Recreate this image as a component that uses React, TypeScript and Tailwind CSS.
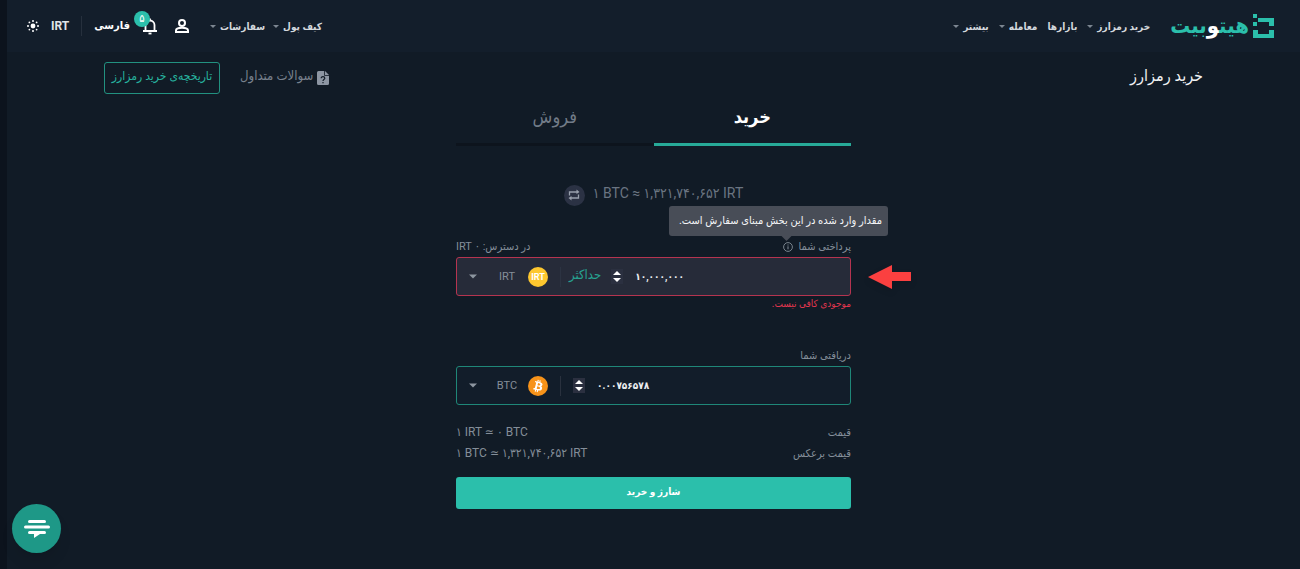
import type { ReactNode } from "react";

function Caret({ className = "" }: { className?: string }) {
  return (
    <svg viewBox="0 0 10 5" className={className} fill="currentColor" aria-hidden="true">
      <path d="M0 0h10L5 5z" />
    </svg>
  );
}

function NavItem({ children, menu = true }: { children: ReactNode; menu?: boolean }) {
  return (
    <a href="#" className="flex items-center gap-1 whitespace-nowrap text-[10px] font-bold text-[#d3d8dd]">
      {children}
      {menu && <Caret className="h-[3px] w-[6px] text-[#7c8691]" />}
    </a>
  );
}

function Logo() {
  return (
    <a href="#" className="flex items-center gap-1 text-[#2bbfab]">
      <svg viewBox="0 0 21 24" className="h-6 w-[21px]" fill="currentColor" aria-hidden="true">
        <path d="M0 0h4v4H0zM0 8h4v4H0zM5 4h16v8h-5V8H5z" />
        <path d="M0 16h5v4h11v-4h5v8H0z" />
      </svg>
      <span className="text-[22px] leading-6 font-bold">
        هیت<span className="text-white">و</span>بیت
      </span>
    </a>
  );
}

function Spinner() {
  return (
    <span className="flex h-[15px] w-3 flex-col items-center justify-center gap-[3px] bg-[#2b3040] text-white">
      <button type="button" aria-label="افزایش" className="block h-1">
        <Caret className="h-1 w-2 rotate-180" />
      </button>
      <button type="button" aria-label="کاهش" className="block h-1">
        <Caret className="h-1 w-2" />
      </button>
    </span>
  );
}

function IrtCoin() {
  return (
    <span className="flex size-5 items-center justify-center rounded-full bg-[#fdc72f] font-[Roboto] text-[9px] leading-5 font-bold text-white">
      IRT
    </span>
  );
}

function BtcCoin() {
  return (
    <svg viewBox="0 0 32 32" className="size-5" aria-hidden="true">
      <circle cx="16" cy="16" r="16" fill="#f7931a" />
      <path
        fill="#fff"
        d="M23.2 14c.3-2.1-1.3-3.2-3.5-4l.7-2.8-1.7-.5-.7 2.8-1.4-.3.7-2.8-1.7-.4-.7 2.8-3.5-.8-.4 1.8s1.2.3 1.2.3c.7.2.8.6.8 1l-2 7.8c-.1.2-.3.5-.8.4l-1.2-.3-.9 2 3.3.8-.7 2.9 1.7.4.7-2.8 1.4.4-.7 2.8 1.7.4.7-2.9c3 .6 5.200.3 6.100-2.300.8-2.100 0-3.400-1.500-4.200 1.100-.2 2-1 2.400-2.500zm-4 5.600c-.5 2.200-4.200 1-5.300.7l1-3.800c1.100.3 4.900.9 4.300 3.100zm.5-5.600c-.5 2-3.500 1-4.500.7l.9-3.500c1 .3 4.100.8 3.600 2.800z"
      />
    </svg>
  );
}

function CoinPicker({ code, icon }: { code: string; icon: ReactNode }) {
  return (
    <button type="button" aria-label={"انتخاب ارز " + code} className="flex items-center text-[#8d96a0]">
      <Caret className="mr-5 h-[5px] w-2" />
      <span className="flex w-5 justify-center font-[Roboto] text-[11px] leading-4 text-[#858e99]">{code}</span>
      <span className="ml-[11px]">{icon}</span>
    </button>
  );
}

export default function App() {
  return (
    <div
      dir="rtl"
      className="min-h-screen border-l-[7px] border-[#0c131d] bg-[#111b26] font-[Roboto,'DejaVu_Sans_Condensed','DejaVu_Sans',sans-serif] text-[#848e99]"
    >
      <header className="flex h-[52px] items-center justify-between bg-[#131e2b] pr-[26px] pl-5">
        <nav className="flex items-center gap-[10px]" aria-label="اصلی">
          <div className="ml-[10px]">
            <Logo />
          </div>
          <NavItem>خرید رمزارز</NavItem>
          <NavItem menu={false}>بازارها</NavItem>
          <NavItem>معامله</NavItem>
          <NavItem>بیشتر</NavItem>
        </nav>
        <div className="flex items-center gap-3 text-white">
          <div className="ml-2 flex items-center gap-2">
            <NavItem>کیف پول</NavItem>
            <NavItem>سفارشات</NavItem>
          </div>
          <button type="button" aria-label="حساب کاربری" className="ml-1">
            <svg viewBox="0 0 16 16" className="size-4" fill="none" stroke="currentColor" strokeWidth="2" aria-hidden="true">
              <circle cx="8" cy="5" r="3" />
              <path d="M2 14v-1.500c0-2 3.500-2.700 6-2.700s6 .7 6 2.700V14z" />
            </svg>
          </button>
          <button type="button" aria-label="اعلان‌ها" className="relative">
            <svg viewBox="0 0 16 18" className="h-[18px] w-4" fill="none" stroke="currentColor" strokeWidth="1.800" aria-hidden="true">
              <path d="M3.500 13.500V8a4.500 4.500 0 0 1 9 0v5.500M1 14h14M8 1.500v2" />
              <path d="M6.500 16.500h3" />
            </svg>
            <span className="absolute -top-[6px] -left-2 flex size-4 items-center justify-center rounded-full bg-[#2bbfab] text-[11px] leading-4">
              ۵
            </span>
          </button>
          <button type="button" className="text-[11px] leading-5 font-bold">
            فارسی
          </button>
          <span className="h-5 w-px bg-[#26303d]" />
          <button type="button" className="text-xs leading-5 font-bold text-[#e0e4e8]">
            IRT
          </button>
          <button type="button" aria-label="حالت روشن">
            <svg viewBox="0 0 12 12" className="size-3" fill="currentColor" aria-hidden="true">
              <circle cx="6" cy="6" r="2.400" />
              <circle cx="6" cy="1" r="1" />
              <circle cx="6" cy="11" r="1" />
              <circle cx="1" cy="6" r="1" />
              <circle cx="11" cy="6" r="1" />
              <circle cx="2.400" cy="2.400" r=".9" />
              <circle cx="9.600" cy="2.400" r=".9" />
              <circle cx="2.400" cy="9.600" r=".9" />
              <circle cx="9.600" cy="9.600" r=".9" />
            </svg>
          </button>
        </div>
      </header>

      <main className="mx-auto w-full max-w-[1099px] pt-[10px]">
        <div className="flex h-8 items-center justify-between">
          <h1 className="pb-1 text-base leading-7 text-[#f0f2f4]">خرید رمزارز</h1>
          <div className="flex items-center gap-5">
            <a href="#" className="flex items-center gap-1 text-[13px] text-[#78818d]">
              <svg viewBox="0 0 12 14" className="h-[14px] w-3" aria-hidden="true">
                <path fill="#8d96a3" d="M1.500 0H8l4 4v8.500a1.500 1.500 0 0 1-1.500 1.500h-9A1.500 1.500 0 0 1 0 12.500v-11A1.500 1.500 0 0 1 1.500 0z" />
                <path d="M7.500 0v4.500H12" fill="none" stroke="#111b26" strokeWidth=".8" />
                <path d="M4.200 7.300c0-2.300 3.600-2.200 3.600 0 0 1.200-1.800 1.300-1.800 2.700M6 11v1.200" fill="none" stroke="#111b26" strokeWidth="1.200" />
              </svg>
              <span className="pb-1">سوالات متداول</span>
            </a>
            <button type="button" className="h-8 w-[116px] rounded-[3px] border border-[#229180] pb-1 text-xs whitespace-nowrap text-[#27b39f]">
              تاریخچه‌ی خرید رمزارز
            </button>
          </div>
        </div>

        <section className="mx-auto w-full max-w-[395px]">
          <div role="tablist" className="grid h-[52px] grid-cols-2 text-lg">
            <button type="button" role="tab" aria-selected="true" className="border-b-[3px] border-[#27aa98] pb-1 font-bold text-white">
              خرید
            </button>
            <button type="button" role="tab" aria-selected="false" className="border-b-[3px] border-[#0d141d] pb-1 text-[#727c88]">
              فروش
            </button>
          </div>

          <div dir="ltr" className="mt-[35px] flex h-6 items-center justify-center gap-2 text-sm text-[#6b7582]">
            <button type="button" aria-label="جابه‌جایی نرخ" className="mt-1 flex size-[21px] items-center justify-center rounded-full bg-[#2b3244]">
              <svg viewBox="0 0 12 12" className="size-3" fill="none" stroke="#98a0ad" aria-hidden="true">
                <path strokeWidth="1.300" d="M1.500 6.500V3H9M10.500 5.500V9H3" />
                <path fill="#98a0ad" stroke="none" d="M8.500 .5 11.500 3 8.500 5zM3.500 7 .5 9l3 2.500z" />
              </svg>
            </button>
            <span>۱ BTC ≈ ۱,۳۲۱,۷۴۰,۶۵۲ IRT</span>
          </div>

          <div className="relative mt-8">
            <div className="flex h-5 items-center justify-between text-[11px]">
              <span className="flex items-center gap-[6px]">
                <label htmlFor="pay">پرداختی شما</label>
                <svg viewBox="0 0 10 10" className="size-[10px]" fill="none" stroke="currentColor" aria-hidden="true">
                  <circle cx="5" cy="5" r="4.400" strokeWidth=".9" />
                  <path d="M5 4.300v3M5 2.500v1" />
                </svg>
              </span>
              <span>در دسترس: ۰ IRT</span>
            </div>
            <div
              role="tooltip"
              className="absolute -right-[37px] bottom-full mb-px flex h-[30px] w-[219px] items-center rounded-[3px] bg-[#484d57] px-[6px] text-[11px] whitespace-nowrap text-[#f5f6f7]"
            >
              مقدار وارد شده در این بخش مبنای سفارش است.
              <Caret className="absolute top-full right-24 h-[5px] w-[11px] text-[#484d57]" />
            </div>
            <div dir="ltr" className="flex h-[39px] items-center rounded-[3px] border border-[#b53450] bg-[#262b39] pl-3">
              <CoinPicker code="IRT" icon={<IrtCoin />} />
              <span className="ml-3 h-5 w-px bg-[#2c3342]" />
              <button type="button" className="mr-[10px] ml-2 pb-1 text-[13px] text-[#26a392]">
                حداکثر
              </button>
              <Spinner />
              <input
                id="pay"
                type="text"
                inputMode="decimal"
                defaultValue="۱۰,۰۰۰,۰۰۰"
                className="ml-3 min-w-0 flex-1 bg-transparent text-[10px] font-bold text-[#eceef0] outline-none"
              />
            </div>
            <svg viewBox="0 0 43 26" className="absolute top-7 -right-[60px] h-[26px] w-[43px] drop-shadow-md" fill="#fb4040" aria-hidden="true">
              <path d="M0 12 24 0v7h19v9H24v8z" />
            </svg>
            <p className="text-[10px] leading-4 text-[#e0364e]">موجودی کافی نیست.</p>
          </div>

          <div className="mt-[34px]">
            <label htmlFor="receive" className="block text-[11px] leading-5">
              دریافتی شما
            </label>
            <div dir="ltr" className="flex h-[39px] items-center rounded-[3px] border border-[#1f8778] bg-[#121d2a] pl-3">
              <CoinPicker code="BTC" icon={<BtcCoin />} />
              <span className="mr-3 ml-3 h-5 w-px bg-[#29313e]" />
              <Spinner />
              <input
                id="receive"
                type="text"
                inputMode="decimal"
                defaultValue="۰.۰۰۷۵۶۵۷۸"
                className="ml-3 min-w-0 flex-1 bg-transparent text-[10px] font-bold text-[#eceef0] outline-none"
              />
            </div>
          </div>

          <dl className="mt-[17px] text-[11px] leading-[21px]">
            <div className="flex justify-between">
              <dt>قیمت</dt>
              <dd dir="ltr" className="text-xs leading-[21px]">۱ IRT ≃ ۰ BTC</dd>
            </div>
            <div className="flex justify-between">
              <dt>قیمت برعکس</dt>
              <dd dir="ltr" className="text-xs leading-[21px]">۱ BTC ≃ ۱,۳۲۱,۷۴۰,۶۵۲ IRT</dd>
            </div>
          </dl>

          <button type="button" className="mt-[13px] h-8 w-full rounded-[3px] bg-[#2bbfab] pb-1 text-[10px] font-bold text-white">
            شارژ و خرید
          </button>
        </section>
      </main>

      <button
        type="button"
        aria-label="گفتگوی آنلاین"
        className="fixed bottom-4 left-3 flex size-[49px] items-center justify-center rounded-full bg-[#1e9887] shadow-lg"
      >
        <svg viewBox="0 0 26 20" className="h-5 w-[26px]" fill="#fff" aria-hidden="true">
          <rect x="4" y="1" width="18" height="3" rx="1.500" />
          <rect x="0" y="6.500" width="26" height="3" rx="1.500" />
          <path d="M5.500 12h15a1.500 1.500 0 0 1 0 3H16l-6 4v-4H5.500a1.500 1.500 0 0 1 0-3z" />
        </svg>
      </button>
    </div>
  );
}
